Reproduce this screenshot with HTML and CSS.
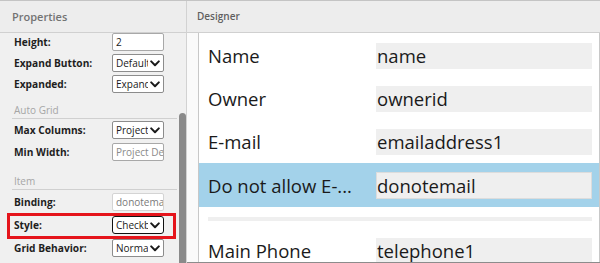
FILE: index.html
```html
<!DOCTYPE html>
<html>
<head>
<meta charset="utf-8">
<link rel="stylesheet" href="styles.css">
</head>
<body>
<div class="app">
  <aside class="props">
    <div class="panel-head props-head">Properties</div>
    <div class="props-body">
      <div class="group g1">
        <div class="row"><span class="lbl">Height:</span><span class="field text">2</span></div>
        <div class="row"><span class="lbl">Expand Button:</span><span class="field select"><span class="val">Default</span><svg class="chev" viewBox="0 0 10 7" width="10" height="7"><polyline points="1.2,1.4 5,5.2 8.8,1.4"/></svg></span></div>
        <div class="row"><span class="lbl">Expanded:</span><span class="field select"><span class="val">Expanded</span><svg class="chev" viewBox="0 0 10 7" width="10" height="7"><polyline points="1.2,1.4 5,5.2 8.8,1.4"/></svg></span></div>
      </div>
      <div class="sec">Auto Grid</div>
      <div class="group g2">
        <div class="row"><span class="lbl">Max Columns:</span><span class="field select"><span class="val">Project</span><svg class="chev" viewBox="0 0 10 7" width="10" height="7"><polyline points="1.2,1.4 5,5.2 8.8,1.4"/></svg></span></div>
        <div class="row"><span class="lbl">Min Width:</span><span class="field text placeholder">Project Default</span></div>
      </div>
      <div class="sec sec-item">Item</div>
      <div class="group g3">
        <div class="row"><span class="lbl">Binding:</span><span class="field text readonly">donotemail</span></div>
        <div class="row marked"><span class="lbl">Style:</span><span class="field select focused"><span class="val">Checkbox</span><svg class="chev" viewBox="0 0 10 7" width="10" height="7"><polyline points="1.2,1.4 5,5.2 8.8,1.4"/></svg></span></div>
        <div class="row"><span class="lbl">Grid Behavior:</span><span class="field select"><span class="val">Normal</span><svg class="chev" viewBox="0 0 10 7" width="10" height="7"><polyline points="1.2,1.4 5,5.2 8.8,1.4"/></svg></span></div>
      </div>
      <div class="scroll-thumb"></div>
    </div>
  </aside>
  <main class="designer">
    <div class="panel-head designer-head">Designer</div>
    <div class="stage">
      <div class="canvas">
        <div class="drow"><span class="dlbl">Name</span><span class="dval">name</span></div>
        <div class="drow"><span class="dlbl">Owner</span><span class="dval">ownerid</span></div>
        <div class="drow"><span class="dlbl">E-mail</span><span class="dval">emailaddress1</span></div>
        <div class="drow selected"><span class="dlbl">Do not allow E-...</span><span class="dval">donotemail</span></div>
        <div class="divider"></div>
        <div class="drow last"><span class="dlbl">Main Phone</span><span class="dval">telephone1</span></div>
      </div>
    </div>
  </main>
</div>
</body>
</html>
```
FILE: styles.css
```css
*, *::before, *::after { box-sizing: border-box; }
html, body { margin: 0; padding: 0; }
body {
  width: 600px;
  height: 263px;
  overflow: hidden;
  font-family: "Open Sans", "Noto Sans", sans-serif;
  background: #f0f0f0;
}
.app {
  display: flex;
  height: 263px;
  border-top: 1px solid #c4c4c4;
}
.props {
  width: 187px;
  flex: none;
  border-right: 1px solid #d2d2d2;
  background: #f0f0f0;
  display: flex;
  flex-direction: column;
  overflow: hidden;
}
.panel-head {
  height: 32px;
  flex: none;
  background: #ededed;
  border-bottom: 1px solid #d0d0d0;
  display: flex;
  align-items: center;
  font-weight: 600;
}
.props-head {
  padding-left: 12px;
  font-size: 11px;
  color: #737373;
  padding-bottom: 1px;
}
.designer-head {
  padding-left: 10px;
  font-size: 10px;
  color: #5f5f5f;
  padding-bottom: 1px;
}
.props-body {
  position: relative;
  flex: 1;
  padding: 0 10px 0 12px;
  display: flex;
  flex-direction: column;
}
.group {
  display: flex;
  flex-direction: column;
  gap: 4px;
}
.g1 { margin-top: 0; gap: 3px; }
.g2 { margin-top: 2px; gap: 4px; }
.g3 { margin-top: 3px; gap: 5px; }
.row {
  position: relative;
  height: 18px;
  margin-right: 12px;
  display: flex;
  align-items: center;
  justify-content: space-between;
}
.lbl {
  padding-left: 2px;
  font-size: 10.2px;
  font-weight: 700;
  color: #1e1e1e;
  white-space: nowrap;
}
.field {
  width: 52px;
  height: 18px;
  background: #fff;
  border: 1px solid #8c8c8c;
  border-radius: 2px;
  display: flex;
  align-items: center;
  font-size: 10px;
  color: #1a1a1a;
  white-space: nowrap;
  overflow: hidden;
  padding-left: 3px;
}
.field.text { border-color: #a8a8a8; }
.field.placeholder { color: #8a8a8a; }
.field.readonly { color: #7a7a7a; border-color: #d4d4d4; }
.field .val {
  flex: 1;
  overflow: hidden;
  min-width: 0;
}
.chev {
  flex: none;
  margin: 0 3px 0 2px;
}
.chev polyline {
  fill: none;
  stroke: #1a1a1a;
  stroke-width: 2;
  stroke-linecap: round;
  stroke-linejoin: round;
}
.field.focused {
  border: 1.5px solid #111;
  border-radius: 3px;
}
.row.marked::after {
  content: "";
  position: absolute;
  left: -5px;
  top: -3px;
  width: 169px;
  height: 26px;
  border: 3px solid #e5141b;
  pointer-events: none;
}
.sec {
  height: 26px;
  display: flex;
  align-items: flex-end;
  padding-left: 2px;
  padding-bottom: 1px;
  border-bottom: 1px solid #d0d0d0;
  font-size: 10px;
  color: #a6a6a6;
  margin-right: -1px;
}
.sec-item { height: 29px; }
.scroll-thumb {
  position: absolute;
  left: 179px;
  top: 80px;
  width: 7px;
  height: 160px;
  background: #8a8a8a;
  border-radius: 4px 4px 0 0;
}
.designer {
  flex: 1;
  display: flex;
  flex-direction: column;
  min-width: 0;
}
.stage {
  flex: 1;
  background: #fafafa;
  padding-left: 11px;
  border-bottom: 1px solid #8c8c8c;
  display: flex;
  overflow: hidden;
}
.canvas {
  flex: 1;
  background: #fff;
  border-left: 1px solid #c8c8c8;
  border-right: 1px solid #c8c8c8;
  padding-top: 1px;
}
.drow {
  display: grid;
  grid-template-columns: 168px 1fr;
  align-items: center;
  padding: 9px 7px 8px 9px;
  font-size: 18.5px;
  color: #1a1a1a;
}
.drow.selected { background: #a3d2ea; }
.dlbl {
  white-space: nowrap;
  overflow: hidden;
  line-height: 26px;
}
.dval {
  height: 26px;
  background: #efefef;
  line-height: 26px;
  padding-left: 1px;
  white-space: nowrap;
  overflow: hidden;
}
.drow.selected .dval {
  height: 27px;
  border: 1px solid #dcdcdc;
  line-height: 25px;
  padding-left: 0;
}
.divider {
  height: 4px;
  margin: 10px 7px 0 9px;
  background: #efefef;
}
.drow.last { padding-top: 17px; }
```
